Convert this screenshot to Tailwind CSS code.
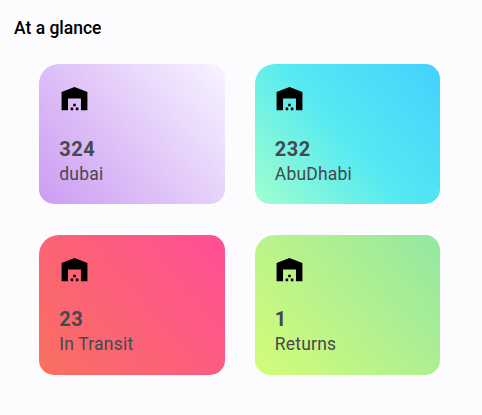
<!DOCTYPE html>
<html lang="en">
<head>
<meta charset="utf-8">
<title>At a glance</title>
<script src="https://cdn.jsdelivr.net/npm/@tailwindcss/browser@4"></script>
</head>
<body class="min-h-screen bg-[#fcfcff] font-['Roboto',sans-serif] text-[#45484d]">
<svg class="hidden"><symbol id="warehouse" viewBox="0 0 24 24"><path d="M22 21V7L12 3 2 7v14h5v-9h10v9h5zm-11-2H9v2h2v-2zm2-3h-2v2h2v-2zm2 3h-2v2h2v-2z"/></symbol></svg>
<main class="pt-4">
  <h1 class="pl-3.5 text-[17.5px] leading-6 font-medium text-black">At a glance</h1>
  <div class="mt-[23.7px] ml-[39px] grid w-[401px] grid-cols-2 gap-x-[30px] gap-y-[30.7px]">
    <section class="h-[140.2px] rounded-[15px] rounded-tl-[20px] bg-[linear-gradient(50deg,#cc9cf2,#f7f4ff)] pt-[19px] pl-5">
      <svg class="-ml-[0.3px] size-[31px] fill-black"><use href="#warehouse"/></svg>
      <p class="mt-[22px] pl-[0.3px] text-xl leading-[26px] font-bold tracking-[0.5px]">324</p>
      <p class="pl-[0.3px] text-[17.5px] leading-6 tracking-[0.2px]">dubai</p>
    </section>
    <section class="h-[140.2px] rounded-[15px] rounded-tl-[20px] bg-[linear-gradient(50deg,#a1ffce,#54e9f2_50%,#45d0ff)] pt-[19px] pl-5">
      <svg class="-ml-[0.3px] size-[31px] fill-black"><use href="#warehouse"/></svg>
      <p class="mt-[22px] pl-[0.3px] text-xl leading-[26px] font-bold tracking-[0.5px]">232</p>
      <p class="pl-[0.3px] text-[17.5px] leading-6 tracking-[0.2px]">AbuDhabi</p>
    </section>
    <section class="h-[140.2px] rounded-[15px] rounded-tl-[20px] bg-[linear-gradient(50deg,#f9705f,#ff4f96)] pt-[19px] pl-5">
      <svg class="-ml-[0.3px] size-[31px] fill-black"><use href="#warehouse"/></svg>
      <p class="mt-[21px] pl-[0.3px] text-xl leading-[26px] font-bold tracking-[0.5px]">23</p>
      <p class="pl-[0.3px] text-[17.5px] leading-6 tracking-[0.2px]">In Transit</p>
    </section>
    <section class="h-[140.2px] rounded-[15px] rounded-tl-[20px] bg-[linear-gradient(50deg,#d4fc79,#94e7a2)] pt-[19px] pl-5">
      <svg class="-ml-[0.3px] size-[31px] fill-black"><use href="#warehouse"/></svg>
      <p class="mt-[21px] pl-[0.3px] text-xl leading-[26px] font-bold tracking-[0.5px]">1</p>
      <p class="pl-[0.3px] text-[17.5px] leading-6 tracking-[0.2px]">Returns</p>
    </section>
  </div>
</main>
</body>
</html>
